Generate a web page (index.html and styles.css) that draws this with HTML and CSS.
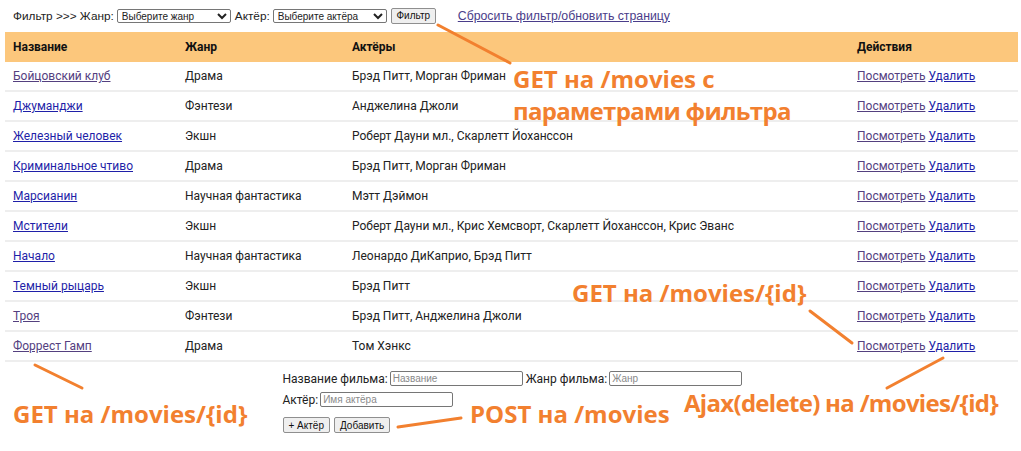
FILE: index.html
```html
<!DOCTYPE html>
<html lang="ru">
<head>
<meta charset="utf-8">
<title>Фильмы</title>
<link rel="stylesheet" href="styles.css">
</head>
<body>
<div class="page">
  <form class="filter">
    <span class="flabel">Фильтр &gt;&gt;&gt; Жанр:</span>
    <select class="fselect"><option>Выберите жанр</option></select>
    <span class="flabel">Актёр:</span>
    <select class="fselect"><option>Выберите актёра</option></select>
    <button type="button" class="btn fbtn">Фильтр</button>
    <a href="#" class="reset">Сбросить фильтр/обновить страницу</a>
  </form>

  <table class="movies">
    <colgroup>
      <col class="c-name"><col class="c-genre"><col class="c-actors"><col class="c-act">
    </colgroup>
    <thead>
      <tr><th>Название</th><th>Жанр</th><th>Актёры</th><th>Действия</th></tr>
    </thead>
    <tbody>
      <tr><td><a href="#" class="visited">Бойцовский клуб</a></td><td>Драма</td><td>Брэд Питт, Морган Фриман</td><td><a href="#" class="visited">Посмотреть</a> <a href="#">Удалить</a></td></tr>
      <tr><td><a href="#">Джуманджи</a></td><td>Фэнтези</td><td>Анджелина Джоли</td><td><a href="#" class="visited">Посмотреть</a> <a href="#">Удалить</a></td></tr>
      <tr><td><a href="#">Железный человек</a></td><td>Экшн</td><td>Роберт Дауни мл., Скарлетт Йоханссон</td><td><a href="#" class="visited">Посмотреть</a> <a href="#">Удалить</a></td></tr>
      <tr><td><a href="#">Криминальное чтиво</a></td><td>Драма</td><td>Брэд Питт, Морган Фриман</td><td><a href="#" class="visited">Посмотреть</a> <a href="#">Удалить</a></td></tr>
      <tr><td><a href="#">Марсианин</a></td><td>Научная фантастика</td><td>Мэтт Дэймон</td><td><a href="#" class="visited">Посмотреть</a> <a href="#">Удалить</a></td></tr>
      <tr><td><a href="#">Мстители</a></td><td>Экшн</td><td>Роберт Дауни мл., Крис Хемсворт, Скарлетт Йоханссон, Крис Эванс</td><td><a href="#" class="visited">Посмотреть</a> <a href="#">Удалить</a></td></tr>
      <tr><td><a href="#">Начало</a></td><td>Научная фантастика</td><td>Леонардо ДиКаприо, Брэд Питт</td><td><a href="#" class="visited">Посмотреть</a> <a href="#">Удалить</a></td></tr>
      <tr><td><a href="#">Темный рыцарь</a></td><td>Экшн</td><td>Брэд Питт</td><td><a href="#" class="visited">Посмотреть</a> <a href="#">Удалить</a></td></tr>
      <tr><td><a href="#" class="visited">Троя</a></td><td>Фэнтези</td><td>Брэд Питт, Анджелина Джоли</td><td><a href="#" class="visited">Посмотреть</a> <a href="#">Удалить</a></td></tr>
      <tr><td><a href="#" class="visited">Форрест Гамп</a></td><td>Драма</td><td>Том Хэнкс</td><td><a href="#" class="visited">Посмотреть</a> <a href="#">Удалить</a></td></tr>
    </tbody>
  </table>

  <form class="add">
    <div class="arow">
      <label class="alabel">Название фильма:</label>
      <input class="ainput" type="text" placeholder="Название">
      <label class="alabel">Жанр фильма:</label>
      <input class="ainput" type="text" placeholder="Жанр">
    </div>
    <div class="arow">
      <label class="alabel">Актёр:</label>
      <input class="ainput" type="text" placeholder="Имя актёра">
    </div>
    <div class="arow buttons">
      <button type="button" class="btn abtn">+ Актёр</button>
      <button type="button" class="btn abtn">Добавить</button>
    </div>
  </form>

  <svg class="arrows" width="1021" height="451" viewBox="0 0 1021 451">
    <line x1="438" y1="25" x2="510" y2="63"/>
    <line x1="810" y1="311" x2="852" y2="343"/>
    <line x1="943" y1="358" x2="887" y2="388"/>
    <line x1="35" y1="365" x2="82" y2="388"/>
    <line x1="398" y1="427" x2="461" y2="418"/>
  </svg>

  <div class="note note-filter">GET на /movies с<br><span class="tight">параметрами фильтра</span></div>
  <div class="note note-view">GET на /movies/{id}</div>
  <div class="note note-delete">Ajax(delete) на /movies/{id}</div>
  <div class="note note-title">GET на /movies/{id}</div>
  <div class="note note-post">POST на /movies</div>
</div>
</body>
</html>
```

FILE: styles.css
```css
html, body {
  margin: 0;
  padding: 0;
  background: #ffffff;
}

.page {
  position: relative;
  width: 1021px;
  height: 451px;
  overflow: hidden;
  font-family: Roboto, "Liberation Sans", sans-serif;
  color: #222222;
}

/* filter bar */
.filter {
  display: flex;
  align-items: center;
  height: 17px;
  padding: 7px 0 0 13px;
  margin: 0 0 8px 0;
  font-family: "Liberation Sans", Arial, sans-serif;
  font-size: 11.8px;
  color: #222;
}
.flabel {
  margin-right: 3px;
}
.fselect {
  width: 114px;
  height: 14px;
  padding: 0;
  margin: 0 4px 0 0;
  font-family: "Liberation Sans", Arial, sans-serif;
  font-size: 10px;
  border: 1px solid #767676;
  border-radius: 2px;
  background: #fff;
  color: #222;
}
.btn {
  font-family: "Liberation Sans", Arial, sans-serif;
  font-size: 10px;
  height: 16px;
  padding: 0 6px;
  border: 1px solid #8f8f8f;
  border-radius: 2px;
  background: #efefef;
  color: #111;
}
.fbtn {
  width: 45px;
  padding: 0;
}
.reset {
  margin-left: 22px;
  font-size: 12.3px;
  color: #4a3d8a;
}

/* table */
.movies {
  margin-left: 5px;
  width: 1013px;
  table-layout: fixed;
  border-collapse: collapse;
  font-size: 12px;
}
.c-name { width: 172px; }
.c-genre { width: 167px; }
.c-actors { width: 505px; }
.c-act { width: 169px; }

.movies th {
  background: #fcc77c;
  height: 30px;
  padding: 0 8px;
  text-align: left;
  font-weight: 700;
  color: #111;
}
.movies td {
  height: 28px;
  padding: 0 8px;
  border-bottom: 2px solid #eeeeee;
  white-space: nowrap;
}
.movies a {
  color: #1f1fa8;
}
.movies a.visited {
  color: #54407f;
}

/* add form */
.add {
  width: 456px;
  margin: 9px auto 0 auto;
  font-size: 12px;
  white-space: nowrap;
}
.arow {
  display: flex;
  align-items: center;
  height: 15px;
  margin-bottom: 6px;
}
.arow.buttons {
  margin-top: 10px;
  height: 16px;
}
.alabel {
  margin-right: 2px;
  color: #222;
}
.ainput {
  box-sizing: border-box;
  width: 133px;
  height: 15px;
  margin: 0 3px 0 0;
  padding: 0 2px;
  border: 1px solid #767676;
  border-radius: 2px;
  font-family: "Liberation Sans", Arial, sans-serif;
  font-size: 10px;
}
.ainput::placeholder {
  color: #8a8a8a;
}
.abtn {
  height: 16px;
  margin-right: 4px;
  padding: 0 5px;
}

/* annotation overlay */
.arrows {
  position: absolute;
  left: 0;
  top: 0;
  pointer-events: none;
}
.arrows line {
  stroke: #f2802f;
  stroke-width: 3;
  stroke-linecap: round;
}
.note {
  position: absolute;
  font-family: "Open Sans", sans-serif;
  font-weight: 700;
  font-size: 24px;
  line-height: 24px;
  color: #f2802f;
  white-space: nowrap;
}
.note-filter {
  left: 513px;
  top: 63px;
  line-height: 32px;
}
.tight {
  letter-spacing: -0.7px;
}
.note-view { left: 572px; top: 281px; }
.note-delete { left: 684px; top: 391px; letter-spacing: -0.7px; }
.note-title { left: 13px; top: 402px; }
.note-post { left: 470px; top: 402px; }
```
